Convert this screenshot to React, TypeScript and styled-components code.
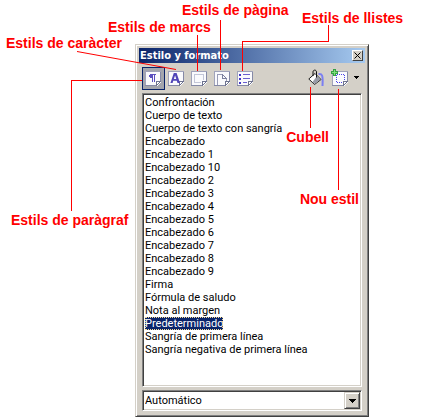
import React, { useState } from 'react';
import styled, { createGlobalStyle } from 'styled-components';

const GlobalStyle = createGlobalStyle`
  *, *::before, *::after { box-sizing: border-box; }
  body { margin: 0; background: #fff; }
`;

const face = '#d4d0c8';
const uiFont = 'Roboto, "Liberation Sans", sans-serif';

const Figure = styled.main`
  position: relative;
  display: flex;
  flex-direction: column;
  min-height: 100vh;
  padding: 44px 63px 0 135px;
`;

const Panel = styled.section`
  flex: 1;
  display: flex;
  flex-direction: column;
  padding: 2px 3px 3px 2px;
  background: ${face};
  border: 1px solid;
  border-color: ${face} #404040 #404040 ${face};
  box-shadow: inset 1px 1px #fff, inset -1px -1px #808080;
`;

const TitleBar = styled.header`
  display: flex;
  align-items: center;
  justify-content: space-between;
  height: 15px;
  margin: 1px 0 0 1px;
  padding: 0 2px 0 1px;
  background: linear-gradient(90deg, #0a246a, #a6caf0);
`;

const Title = styled.h1`
  margin: 0;
  color: #fff;
  font: bold 11px/15px "DejaVu Sans Condensed", "DejaVu Sans", sans-serif;
  white-space: nowrap;
`;

const CloseButton = styled.button`
  display: flex;
  align-items: center;
  justify-content: center;
  width: 11px;
  height: 11px;
  padding: 0;
  background: ${face};
  border: 1px solid;
  border-color: #fff #404040 #404040 #fff;
`;

const Body = styled.div`
  flex: 1;
  display: flex;
  flex-direction: column;
  gap: 3px;
  padding: 4px 3px 2px 4px;
`;

const Toolbar = styled.div`
  display: flex;
  height: 23px;
`;

const Spacer = styled.div`
  flex: 1;
`;

const ToolButton = styled.button<{ $pressed?: boolean }>`
  display: flex;
  align-items: flex-start;
  width: 23px;
  height: 23px;
  padding: 3px 0 0 2px;
  background: ${p => (p.$pressed ? '#a3a5ad' : 'transparent')};
  border: 1px solid ${p => (p.$pressed ? '#0a246a' : 'transparent')};
`;

const ActionButton = styled(ToolButton)`
  padding: 1px 0 0 2px;
`;

const MenuButton = styled(ToolButton)`
  width: 11px;
  padding: 8px 0 0 2px;
`;

const StyleList = styled.ul`
  flex: 1;
  margin: 0;
  padding: 2px;
  list-style: none;
  background: #fff;
  border: 1px solid;
  border-color: #808080 #fff #fff #808080;
  box-shadow: inset 1px 1px #404040, inset -1px -1px ${face};
`;

const StyleItem = styled.li`
  display: flex;
  height: 13px;
  cursor: default;
`;

const StyleName = styled.span<{ $selected: boolean }>`
  font: 11px/13px ${uiFont};
  white-space: nowrap;
  color: ${p => (p.$selected ? '#fff' : '#000')};
  background: ${p => (p.$selected ? '#0a246a' : 'transparent')};
  outline: ${p => (p.$selected ? '1px dotted #f5db95' : 'none')};
  outline-offset: -1px;
`;

const Combo = styled.label`
  display: grid;
  grid-template-columns: 1fr 16px;
  height: 21px;
  padding: 1px;
  background: #fff;
  border: 1px solid;
  border-color: #808080 #fff #fff #808080;
  box-shadow: inset 1px 1px #404040, inset -1px -1px ${face};
`;

const Select = styled.select`
  grid-area: 1 / 1 / 2 / 3;
  width: 100%;
  height: 17px;
  padding: 0 18px 0 1px;
  appearance: none;
  color: #000;
  background: transparent;
  border: 0;
  font: 11px/17px ${uiFont};
`;

const ComboArrow = styled.span`
  grid-area: 1 / 2 / 2 / 3;
  display: flex;
  align-items: center;
  justify-content: center;
  height: 17px;
  background: ${face};
  border: 1px solid;
  border-color: ${face} #404040 #404040 ${face};
  box-shadow: inset 1px 1px #fff, inset -1px -1px #808080;
  pointer-events: none;
`;

const Callout = styled.span<{ $top: number; $left?: number; $right?: number }>`
  position: absolute;
  top: ${p => p.$top}px;
  left: ${p => (p.$left === undefined ? 'auto' : `${p.$left}px`)};
  right: ${p => (p.$right === undefined ? 'auto' : `${p.$right}px`)};
  color: #f00;
  font: bold 14px/16px "Liberation Sans", Arial, sans-serif;
  white-space: nowrap;
  pointer-events: none;
`;

const Leaders = styled.svg<{ $side: 'left' | 'right' }>`
  position: absolute;
  top: 0;
  ${p => p.$side}: 0;
  fill: none;
  stroke: #f00;
  pointer-events: none;
`;

const Icon = ({ children }: { children: React.ReactNode }) => (
  <svg width="16" height="15" viewBox="0 0 16 15" fill="none" shapeRendering="crispEdges" aria-hidden="true">
    {children}
  </svg>
);

const Sheet = () => (
  <>
    <path d="M0 0H16V11L12 15H0Z" fill="#fafafd" />
    <path d="M0.5 15V0.5H15.5" stroke="#a0a3bb" />
    <path d="M15.5 1V10M0 14.5H11" stroke="#8589a6" />
    <path d="M11 15V10H16V11H15V12H14V13H13V14H12V15Z" fill="#6e738f" />
    <path d="M12 11H14V12H13V13H12Z" fill="#fff" />
  </>
);

const ParagraphIcon = () => (
  <Icon>
    <Sheet />
    <path d="M5 3H11V4H10V11H9V4H8V11H7V7H5V6H4V4H5Z" fill="#5b4fc0" />
  </Icon>
);

const CharacterIcon = () => (
  <Icon>
    <Sheet />
    <path
      d="M5.8 2H8.6L12 12H9.5L8.8 9.8H5.2L4.6 12H2.4ZM7.1 4.5L5.8 8H8.3Z"
      fill="#5146b8"
      fillRule="evenodd"
      shapeRendering="auto"
    />
  </Icon>
);

const FrameIcon = () => (
  <Icon>
    <Sheet />
    <path d="M3 3.5H13M3.5 4V11M3 11.5H10M12.5 4V9" stroke="#c3c6d8" />
  </Icon>
);

const PageIcon = () => (
  <Icon>
    <Sheet />
    <path d="M3.5 14V3.5H8M12.5 7V10" stroke="#9a9db6" />
    <path d="M8.5 3V7.5H13M9 4.5H10M10 5.5H11M11 6.5H12" stroke="#7d819f" />
  </Icon>
);

const ListIcon = () => (
  <Icon>
    <Sheet />
    <path d="M2 3H4V5H2ZM2 7H4V9H2ZM2 11H4V13H2Z" fill="#4338c8" />
    <path d="M6 3.5H13M6 7.5H13M6 11.5H10" stroke="#6a60d0" />
  </Icon>
);

const BucketIcon = () => (
  <svg width="18" height="18" viewBox="0 0 18 18" fill="none" aria-hidden="true">
    <path d="M10.5 5C14 4.5 15.200 5.5 14.5 17" stroke="#7b7ff2" strokeWidth="2" />
    <path d="M7 4.500L13 10.500L6.500 15.500L0.800 10Z" fill="#fff" stroke="#222" />
    <path d="M9 7L12.500 10.500L6.500 15L4.500 13Z" fill="#989ca8" />
    <path d="M5 7V3C5 0.500 8.500 0.500 8.500 3V8.500" stroke="#111" />
  </svg>
);

const NewStyleIcon = () => (
  <svg width="18" height="17" viewBox="0 0 18 17" fill="none" shapeRendering="crispEdges" aria-hidden="true">
    <g transform="translate(1 2)">
      <Sheet />
      <path d="M4.5 4V11.5H11M12.5 9V3.5H5" stroke="#4a42e8" strokeDasharray="1 1" />
    </g>
    <path d="M2 0H5V2H7V5H5V7H2V5H0V2H2Z" fill="#35a045" />
    <path d="M3 1H4V3H6V4H4V6H3V4H1V3H3Z" fill="#7ce07c" />
  </svg>
);

const DownArrow = ({ wide }: { wide?: boolean }) =>
  wide ? (
    <svg width="7" height="4" shapeRendering="crispEdges" aria-hidden="true">
      <path d="M0 0H7V1H6V2H5V3H4V4H3V3H2V2H1V1H0Z" />
    </svg>
  ) : (
    <svg width="5" height="3" shapeRendering="crispEdges" aria-hidden="true">
      <path d="M0 0H5V1H4V2H3V3H2V2H1V1H0Z" />
    </svg>
  );

const categories = [
  { label: 'Estils de paràgraf', icon: <ParagraphIcon /> },
  { label: 'Estils de caràcter', icon: <CharacterIcon /> },
  { label: 'Estils de marcs', icon: <FrameIcon /> },
  { label: 'Estils de pàgina', icon: <PageIcon /> },
  { label: 'Estils de llistes', icon: <ListIcon /> },
];

const styleNames = [
  'Confrontación',
  'Cuerpo de texto',
  'Cuerpo de texto con sangría',
  'Encabezado',
  'Encabezado 1',
  'Encabezado 10',
  'Encabezado 2',
  'Encabezado 3',
  'Encabezado 4',
  'Encabezado 5',
  'Encabezado 6',
  'Encabezado 7',
  'Encabezado 8',
  'Encabezado 9',
  'Firma',
  'Fórmula de saludo',
  'Nota al margen',
  'Predeterminado',
  'Sangría de primera línea',
  'Sangría negativa de primera línea',
];

export default function App() {
  const [category, setCategory] = useState(0);
  const [selected, setSelected] = useState('Predeterminado');

  return (
    <Figure>
      <GlobalStyle />
      <Panel aria-label="Estilo y formato">
        <TitleBar>
          <Title>Estilo y formato</Title>
          <CloseButton type="button" aria-label="Cerrar">
            <svg width="7" height="7" viewBox="0 0 7 7" stroke="#000" aria-hidden="true">
              <path d="M0.5 0.5L6.5 6.5M6.5 0.5L0.5 6.5" />
            </svg>
          </CloseButton>
        </TitleBar>
        <Body>
          <Toolbar role="toolbar">
            {categories.map((c, i) => (
              <ToolButton
                key={c.label}
                type="button"
                aria-label={c.label}
                aria-pressed={i === category}
                $pressed={i === category}
                onClick={() => setCategory(i)}
              >
                {c.icon}
              </ToolButton>
            ))}
            <Spacer />
            <ActionButton type="button" aria-label="Cubell">
              <BucketIcon />
            </ActionButton>
            <ActionButton type="button" aria-label="Nou estil">
              <NewStyleIcon />
            </ActionButton>
            <MenuButton type="button" aria-label="Menú">
              <DownArrow />
            </MenuButton>
          </Toolbar>
          <StyleList role="listbox" aria-label="Estilos">
            {styleNames.map(name => (
              <StyleItem
                key={name}
                role="option"
                aria-selected={name === selected}
                onClick={() => setSelected(name)}
              >
                <StyleName $selected={name === selected}>{name}</StyleName>
              </StyleItem>
            ))}
          </StyleList>
          <Combo>
            <Select aria-label="Filtro" defaultValue="Automático">
              <option>Automático</option>
            </Select>
            <ComboArrow>
              <DownArrow wide />
            </ComboArrow>
          </Combo>
        </Body>
      </Panel>

      <Leaders $side="left" width="340" height="220" aria-hidden="true">
        <g shapeRendering="crispEdges">
          <path d="M197.5 35V71" />
          <path d="M220.5 20V70" />
          <path d="M328.5 25V41.5H242.5V71" />
          <path d="M142 80.5H71.5V211" />
        </g>
        <path d="M77 51.5L176 69.5" />
      </Leaders>
      <Leaders $side="right" width="132" height="200" aria-hidden="true">
        <g shapeRendering="crispEdges">
          <path d="M10.5 87V128" />
          <path d="M38.5 89V190" />
        </g>
      </Leaders>
      <Callout $top={2} $left={182}>Estils de pàgina</Callout>
      <Callout $top={10} $left={302}>Estils de llistes</Callout>
      <Callout $top={19} $left={108}>Estils de marcs</Callout>
      <Callout $top={35} $left={6}>Estils de caràcter</Callout>
      <Callout $top={212} $left={11}>Estils de paràgraf</Callout>
      <Callout $top={129} $right={103}>Cubell</Callout>
      <Callout $top={191} $right={73}>Nou estil</Callout>
    </Figure>
  );
}
